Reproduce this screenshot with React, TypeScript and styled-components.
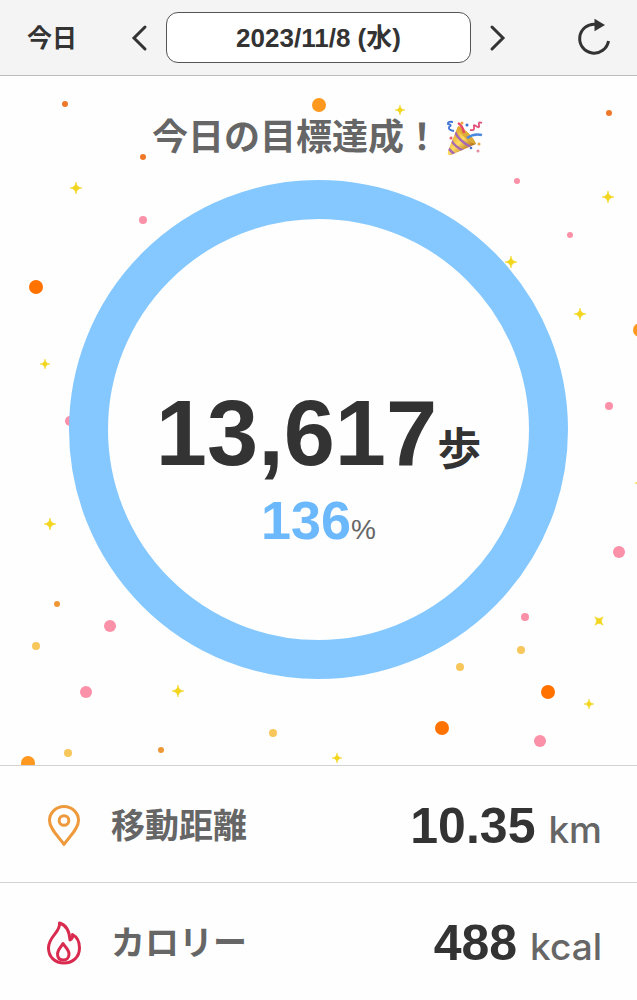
import React from "react";
import styled, { createGlobalStyle } from "styled-components";

const GlobalStyle = createGlobalStyle`
  *, *::before, *::after { box-sizing: border-box; }
  body {
    margin: 0;
    background: #fefefe;
    color: #333;
    font-family: "Liberation Sans", "Noto Sans CJK JP", sans-serif;
  }
`;

const Page = styled.div`
  display: flex;
  flex-direction: column;
`;

const Header = styled.header`
  display: grid;
  grid-template-columns: 1fr minmax(0, 305px) 1fr;
  align-items: center;
  padding: 12px 0;
  background: #f4f4f4;
  border-bottom: 1px solid #bcbcbc;
`;

const HeaderSide = styled.div<{ $end?: boolean }>`
  display: flex;
  align-items: center;
  justify-content: space-between;
  padding: ${(p) => (p.$end ? "0 25px 0 17px" : "0 17px 0 27px")};
`;

const PlainButton = styled.button`
  display: flex;
  align-items: center;
  padding: 0;
  border: 0;
  background: none;
  color: #333;
  font: inherit;
  cursor: pointer;
`;

const TodayButton = styled(PlainButton)`
  font-size: 25px;
  font-weight: 700;
  line-height: 32px;
`;

const DateButton = styled.button`
  height: 51px;
  padding: 0 12px;
  border: 1px solid #555;
  border-radius: 12px;
  background: #fff;
  color: #333;
  font: inherit;
  font-size: 26px;
  font-weight: 700;
  line-height: 32px;
  white-space: nowrap;
  cursor: pointer;
`;

const Hero = styled.main`
  position: relative;
  display: flex;
  flex-direction: column;
  align-items: center;
  padding: 36px 0 86px;
  overflow: hidden;
`;

const Confetti = styled.svg`
  position: absolute;
  inset: 0;
  width: 100%;
  height: 100%;
`;

const Title = styled.h1`
  position: relative;
  display: flex;
  align-items: center;
  margin: 0 0 16px;
  color: #666;
  font-size: 36px;
  font-weight: 700;
  line-height: 52px;
`;

const Ring = styled.section`
  position: relative;
  display: flex;
  flex-direction: column;
  align-items: center;
  justify-content: center;
  gap: 11px;
  width: calc(100% - 138px);
  max-width: 499px;
  aspect-ratio: 1;
  padding-top: 78px;
  border: 39px solid #84c8ff;
  border-radius: 50%;
  white-space: nowrap;
`;

const Steps = styled.p`
  margin: 0;
  font-size: 92px;
  font-weight: 700;
  line-height: 92px;
`;

const StepsUnit = styled.span`
  font-size: 44px;
  line-height: 44px;
`;

const Percent = styled.p`
  margin: 0;
  color: #6cb8fc;
  font-size: 54px;
  font-weight: 700;
  line-height: 60px;
`;

const PercentSign = styled.span`
  color: #666;
  font-size: 28px;
  font-weight: 400;
  line-height: 28px;
`;

const Stats = styled.dl`
  margin: 0;
`;

const StatRow = styled.div`
  display: flex;
  align-items: center;
  justify-content: space-between;
  min-height: 117px;
  padding: 4px 35px 0 44px;
  border-top: 1px solid #d2d2d2;
`;

const StatLabel = styled.dt`
  display: flex;
  align-items: center;
  gap: 27px;
  color: #666;
  font-size: 34px;
  font-weight: 700;
  line-height: 48px;
`;

const StatValue = styled.dd`
  display: flex;
  align-items: baseline;
  gap: 13px;
  margin: 0;
  font-size: 50px;
  font-weight: 700;
  line-height: 60px;
`;

const StatUnit = styled.span`
  color: #666;
  font-family: Inter, "Liberation Sans", sans-serif;
  font-size: 37px;
  font-weight: 500;
  line-height: 40px;
`;

const ORANGE = "#ff7200";
const AMBER = "#ff981f";
const RUST = "#ee7828";
const HONEY = "#f8c75c";
const PINK = "#fb91a8";

const dots: [number, number, number, string][] = [
  [65, 28, 3, RUST], [319, 29, 7, AMBER], [609, 37, 3, RUST], [143, 81, 3, RUST],
  [517, 105, 3, PINK], [143, 144, 4, PINK], [570, 159, 3, PINK], [36, 211, 7, ORANGE],
  [640, 254, 7, AMBER], [609, 330, 4, PINK], [70, 345, 5, PINK], [619, 476, 6, PINK],
  [57, 528, 3, "#ef9637"], [110, 550, 6, PINK], [525, 541, 4, PINK], [36, 570, 4, HONEY],
  [521, 574, 4, HONEY], [460, 591, 4, HONEY], [86, 616, 6, PINK], [548, 616, 7, ORANGE],
  [442, 652, 7, ORANGE], [540, 665, 6, PINK], [273, 657, 4, HONEY], [161, 674, 3, "#ef9637"],
  [68, 677, 4, HONEY], [28, 687, 7, AMBER],
];

const stars: [number, number, number, number][] = [
  [400, 34, 5, 0], [76, 112, 6, 0], [608, 121, 6, 0], [511, 186, 6, 0], [580, 238, 6, 0],
  [45, 288, 5, 0], [50, 448, 6, 0], [599, 545, 6, 45], [178, 615, 6, 0], [589, 628, 5, 0],
  [337, 682, 5, 0], [640, 407, 5, 0],
];

const starPath = "M0-6C.7-2 2-.7 6 0C2 .7.7 2 0 6C-.7 2-2 .7-6 0C-2-.7-.7-2 0-6Z";

function ConfettiLayer() {
  return (
    <Confetti viewBox="0 0 637 689" preserveAspectRatio="xMidYMid slice" aria-hidden="true">
      {dots.map(([x, y, r, fill]) => (
        <circle key={`${x}-${y}`} cx={x} cy={y} r={r} fill={fill} />
      ))}
      {stars.map(([x, y, r, turn]) => (
        <path
          key={`${x}-${y}`}
          d={starPath}
          fill="#f2d51d"
          stroke="#f2d51d"
          strokeWidth=".6"
          transform={`translate(${x} ${y}) rotate(${turn}) scale(${r / 6})`}
        />
      ))}
    </Confetti>
  );
}

function Chevron({ next }: { next?: boolean }) {
  return (
    <svg width="18" height="30" viewBox="0 0 18 30" fill="none" stroke="#333" strokeWidth="3" strokeLinecap="round" aria-hidden="true">
      <path d={next ? "M4 4L15 15L4 26" : "M14 4L3 15L14 26"} />
    </svg>
  );
}

function RefreshIcon() {
  return (
    <svg width="36" height="40" viewBox="0 0 36 40" fill="none" aria-hidden="true">
      <path d="M19.500 6.200A14.500 14.500 0 1 0 32.500 23" stroke="#333" strokeWidth="3" />
      <path d="M18.500 .8L29 7L18.500 13.200Z" fill="#333" />
    </svg>
  );
}

function PartyPopper() {
  return (
    <svg width="45" height="40" viewBox="0 0 45 40" fill="none" role="img" aria-label="🎉">
      <defs>
        <linearGradient id="cone" x1="10" y1="18" x2="26" y2="34" gradientUnits="userSpaceOnUse">
          <stop stopColor="#e4a72c" />
          <stop offset=".5" stopColor="#ffdc62" />
          <stop offset="1" stopColor="#b9781f" />
        </linearGradient>
        <clipPath id="coneClip">
          <path d="M18 8C25 11 33 19 36 26L11 37Q7 38 8 33Z" />
        </clipPath>
      </defs>
      <path d="M18 8C25 11 33 19 36 26L11 37Q7 38 8 33Z" fill="url(#cone)" />
      <g clipPath="url(#coneClip)" stroke="#a56ab3" strokeWidth="2.5">
        <path d="M15 14Q19 23 31 29" />
        <path d="M11 22Q15 29 24 33" />
        <path d="M8 30Q11 33 15 37" />
      </g>
      <path d="M18 8C24 10 33 18 36 26C29 25 20 17 18 8Z" fill="#dfab38" />
      <path d="M27 20Q34 15 42 17" stroke="#4b87df" strokeWidth="2.5" />
      <path d="M24 15Q23 8 18 5" stroke="#e84866" strokeWidth="2.5" />
      <path d="M13 4Q7 3 8 6Q13 7 9 9Q8 12 14 13" stroke="#3f74d4" strokeWidth="1.800" />
      <path d="M30 12Q35 13 34 9Q33 6 36 8Q40 11 39 7Q38 3 42 5" stroke="#e05078" strokeWidth="1.800" />
      <circle cx="27" cy="7" r="1.5" fill="#3f74d4" />
      <circle cx="22" cy="5" r="1.5" fill="#f0a53a" />
      <circle cx="31" cy="30" r="1.3" fill="#3f74d4" />
      <circle cx="39" cy="26" r="1.5" fill="#edab49" />
      <circle cx="38" cy="33" r="1.5" fill="#e58aa0" />
      <circle cx="11" cy="20" r="1.5" fill="#e45b69" />
    </svg>
  );
}

function PinIcon() {
  return (
    <svg width="40" height="46" viewBox="0 0 40 46" fill="none" stroke="#ee9a3c" strokeWidth="3" strokeLinejoin="round" aria-hidden="true">
      <path d="M20 41.5C15 34 5.5 26 5.5 17.5A14.5 14 0 0 1 34.500 17.5C34.5 26 25 34 20 41.500Z" />
      <circle cx="20" cy="17.500" r="4.800" />
    </svg>
  );
}

function FlameIcon() {
  return (
    <svg width="40" height="46" viewBox="0 0 40 46" fill="none" stroke="#d92b4f" strokeWidth="3" strokeLinejoin="round" aria-hidden="true">
      <path d="M15.500 3C17 12 4.500 16 4.500 28C4.500 37 11 43 20 43C29 43 35.500 37 35.500 28C35.500 22 33 17 28.500 14.500C29 17 28 19.500 26 20C25.500 12 22 5 15.500 3Z" />
      <path d="M19 23.500C21 27 25 29.500 25 34C25 38 22.500 40 19.500 40C16 40 13.500 38 13.500 34C13.500 29.500 17 27 19 23.500Z" />
    </svg>
  );
}

const stats = [
  { label: "移動距離", value: "10.35", unit: "km", icon: <PinIcon /> },
  { label: "カロリー", value: "488", unit: "kcal", icon: <FlameIcon /> },
];

export default function App() {
  return (
    <Page lang="ja">
      <GlobalStyle />
      <Header>
        <HeaderSide>
          <TodayButton type="button">今日</TodayButton>
          <PlainButton type="button" aria-label="前の日">
            <Chevron />
          </PlainButton>
        </HeaderSide>
        <DateButton type="button">2023/11/8 (水)</DateButton>
        <HeaderSide $end>
          <PlainButton type="button" aria-label="次の日">
            <Chevron next />
          </PlainButton>
          <PlainButton type="button" aria-label="更新">
            <RefreshIcon />
          </PlainButton>
        </HeaderSide>
      </Header>
      <Hero>
        <ConfettiLayer />
        <Title>
          今日の目標達成！
          <PartyPopper />
        </Title>
        <Ring>
          <Steps>
            13,617<StepsUnit>歩</StepsUnit>
          </Steps>
          <Percent>
            136<PercentSign>%</PercentSign>
          </Percent>
        </Ring>
      </Hero>
      <Stats>
        {stats.map((s) => (
          <StatRow key={s.label}>
            <StatLabel>
              {s.icon}
              {s.label}
            </StatLabel>
            <StatValue>
              {s.value}
              <StatUnit>{s.unit}</StatUnit>
            </StatValue>
          </StatRow>
        ))}
      </Stats>
    </Page>
  );
}
